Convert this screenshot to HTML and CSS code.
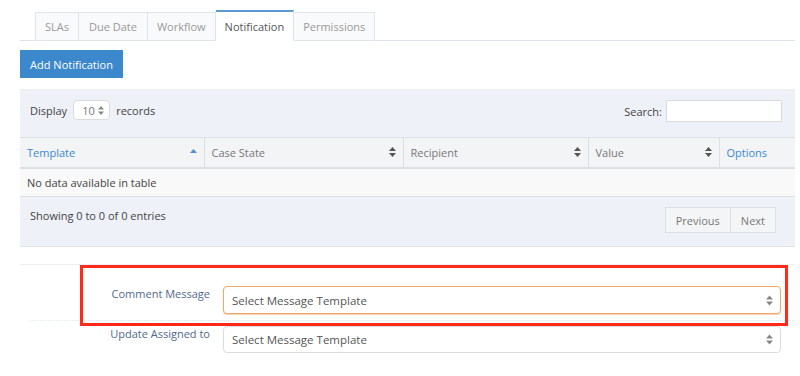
FILE: index.html
```html
<!DOCTYPE html>
<html>
<head>
<meta charset="utf-8">
<link rel="stylesheet" href="styles.css">
</head>
<body>
<div class="page">
  <ul class="tabs">
    <li class="tab">SLAs</li>
    <li class="tab">Due Date</li>
    <li class="tab">Workflow</li>
    <li class="tab active">Notification</li>
    <li class="tab">Permissions</li>
  </ul>

  <div class="actions">
    <button class="btn-primary">Add Notification</button>
  </div>

  <div class="panel">
    <div class="controls">
      <div class="length">
        <span>Display</span>
        <span class="mini-select">10
          <svg class="updown" width="6" height="9" viewBox="0 0 6 9"><path d="M3 0L6 3.5H0Z M3 9L0 5.5H6Z" fill="#888"/></svg>
        </span>
        <span>records</span>
      </div>
      <div class="search">
        <span>Search:</span>
        <span class="search-input"></span>
      </div>
    </div>

    <table class="grid">
      <thead>
        <tr>
          <th class="c1 sorted">Template<svg class="sort" width="7" height="4" viewBox="0 0 7 4"><path d="M3.5 0L7 4H0Z" fill="#4b8fd6"/></svg></th>
          <th class="c2">Case State<svg class="sort" width="7" height="10" viewBox="0 0 7 10"><path d="M3.5 0L7 4H0Z M3.5 10L0 6H7Z" fill="#555"/></svg></th>
          <th class="c3">Recipient<svg class="sort" width="7" height="10" viewBox="0 0 7 10"><path d="M3.5 0L7 4H0Z M3.5 10L0 6H7Z" fill="#555"/></svg></th>
          <th class="c4">Value<svg class="sort" width="7" height="10" viewBox="0 0 7 10"><path d="M3.5 0L7 4H0Z M3.5 10L0 6H7Z" fill="#555"/></svg></th>
          <th class="c5 link">Options</th>
        </tr>
      </thead>
      <tbody>
        <tr><td colspan="5">No data available in table</td></tr>
      </tbody>
    </table>

    <div class="footer">
      <span class="info">Showing 0 to 0 of 0 entries</span>
      <div class="pager">
        <span class="pg">Previous</span>
        <span class="pg">Next</span>
      </div>
    </div>
  </div>

  <div class="form">
    <div class="form-row first">
      <label class="lbl">Comment Message</label>
      <div class="sel focus">Select Message Template
        <svg class="updown" width="7" height="11" viewBox="0 0 7 11"><path d="M3.5 0.5L7 4.5H0Z M3.5 10.5L0 6.5H7Z" fill="#888"/></svg>
      </div>
    </div>
    <div class="form-row second">
      <label class="lbl">Update Assigned to</label>
      <div class="sel">Select Message Template
        <svg class="updown" width="7" height="11" viewBox="0 0 7 11"><path d="M3.5 0.5L7 4.5H0Z M3.5 10.5L0 6.5H7Z" fill="#888"/></svg>
      </div>
    </div>
    <div class="highlight"></div>
  </div>
</div>
</body>
</html>
```
FILE: styles.css
```css
* { box-sizing: border-box; }
html, body { margin: 0; padding: 0; background: #fff; }
body {
  font-family: "Open Sans", "Noto Sans", sans-serif;
  font-size: 11px;
  color: #555;
}
.page {
  padding: 10px 5px 0 20px;
  width: 800px;
}

/* tabs */
.tabs {
  list-style: none;
  margin: 0;
  padding: 0 0 0 15px;
  display: flex;
  align-items: flex-end;
  height: 31px;
  border-bottom: 1px solid #dbe2ec;
}
.tab {
  height: 29px;
  margin-bottom: -1px;
  padding: 0 9px;
  line-height: 27px;
  border: 1px solid #dfe4eb;
  border-left: none;
  background: #f9fafb;
  color: #999;
  font-size: 11px;
}
.tab:first-child { border-left: 1px solid #dfe4eb; }
.tab:nth-child(2) { padding: 0 10px; }
.tab.active {
  height: 31px;
  background: #fff;
  color: #555;
  border-top: 2px solid #5b9bd1;
  border-bottom: 1px solid #fff;
  line-height: 29px;
}

/* action */
.actions { padding-top: 9px; }
.btn-primary {
  display: block;
  height: 28px;
  width: 103px;
  padding: 0;
  border: none;
  background: #3c88cc;
  color: #fff;
  font-family: inherit;
  font-size: 11px;
}

/* panel */
.panel {
  margin-top: 11px;
  border-top: 1px solid #eceef2;
  border-bottom: 1px solid #dfe3e8;
  background: #eef1f8;
  padding: 10px 0 13px;
}
.controls {
  display: flex;
  justify-content: space-between;
  align-items: flex-start;
  padding: 0 13px 0 10px;
  height: 37px;
}
.length {
  display: flex;
  align-items: center;
  height: 20px;
  gap: 6px;
  font-size: 11px;
  color: #444;
}
.mini-select {
  display: flex;
  align-items: center;
  justify-content: space-between;
  width: 37px;
  height: 20px;
  padding: 0 5px 0 8px;
  background: #fff;
  border: 1px solid #d8dbe0;
  border-radius: 4px;
  color: #777;
  font-size: 11px;
}
.search {
  display: flex;
  align-items: center;
  gap: 4px;
  height: 22px;
  font-size: 11px;
  color: #444;
}
.search-input {
  display: block;
  width: 116px;
  height: 22px;
  background: #fff;
  border: 1px solid #d8dbe0;
}

/* table */
.grid {
  width: 100%;
  border-collapse: collapse;
  font-size: 11px;
}
.grid th {
  position: relative;
  height: 30px;
  padding: 0 7px;
  text-align: left;
  font-weight: normal;
  color: #777;
  background: #f3f4f6;
  border: 1px solid #dcdfe3;
  border-bottom: 2px solid #dcdfe3;
  border-top: 1px solid #dcdfe3;
}
.grid th.sorted, .grid th.link { color: #3a88d6; }
.c1 { width: 184px; }
.c2 { width: 199px; }
.c3 { width: 185px; }
.c4 { width: 131px; }
.grid th:first-child { border-left: none; }
.grid th:last-child { border-right: none; }
.sort {
  position: absolute;
  right: 7px;
  top: 50%;
  transform: translateY(-50%);
}
.c1 .sort { top: 11px; transform: none; }
.grid td {
  height: 29px;
  padding: 0 7px;
  background: #f9f9f9;
  border-bottom: 1px solid #dcdfe3;
  color: #444;
}

/* footer */
.footer {
  display: flex;
  justify-content: space-between;
  align-items: flex-start;
  padding: 10px 19px 0 10px;
}
.info {
  font-size: 11px;
  color: #444;
  line-height: 17px;
}
.pager {
  display: flex;
  height: 26px;
  border: 1px solid #dcdfe3;
  background: #f4f5f6;
}
.pg {
  display: flex;
  align-items: center;
  padding: 0 10px;
  color: #777;
  font-size: 11px;
}
.pg + .pg { border-left: 1px solid #dcdfe3; }

/* form */
.form {
  position: relative;
  margin-top: 17px;
  border-top: 1px solid #eeeeee;
}
.form-row {
  display: flex;
  align-items: flex-start;
  gap: 13px;
  padding-right: 14px;
}
.form-row.first {
  padding-top: 21px;
  padding-bottom: 6px;
  margin-left: 10px;
  border-bottom: 1px dotted #dfe5ee;
}
.form-row.second { padding-top: 5px; margin-left: 10px; }
.lbl {
  flex: none;
  width: 180px;
  text-align: right;
  color: #51698c;
  font-size: 11px;
  line-height: 16px;
}
.sel {
  flex: 1;
  display: flex;
  align-items: center;
  justify-content: space-between;
  height: 28px;
  padding: 0 7px 0 8px;
  border: 1px solid #dcdcdc;
  border-radius: 4px;
  background: #fff;
  color: #555;
  font-size: 11.5px;
}
.sel.focus {
  border-color: #f1a66a;
  box-shadow: 0 1px 1px #f8d2ad;
}
.form-row.second .sel { height: 27px; }

.highlight {
  position: absolute;
  left: 60px;
  top: 0px;
  width: 708px;
  height: 61px;
  border: 3px solid #ff2a1a;
  pointer-events: none;
}
```
